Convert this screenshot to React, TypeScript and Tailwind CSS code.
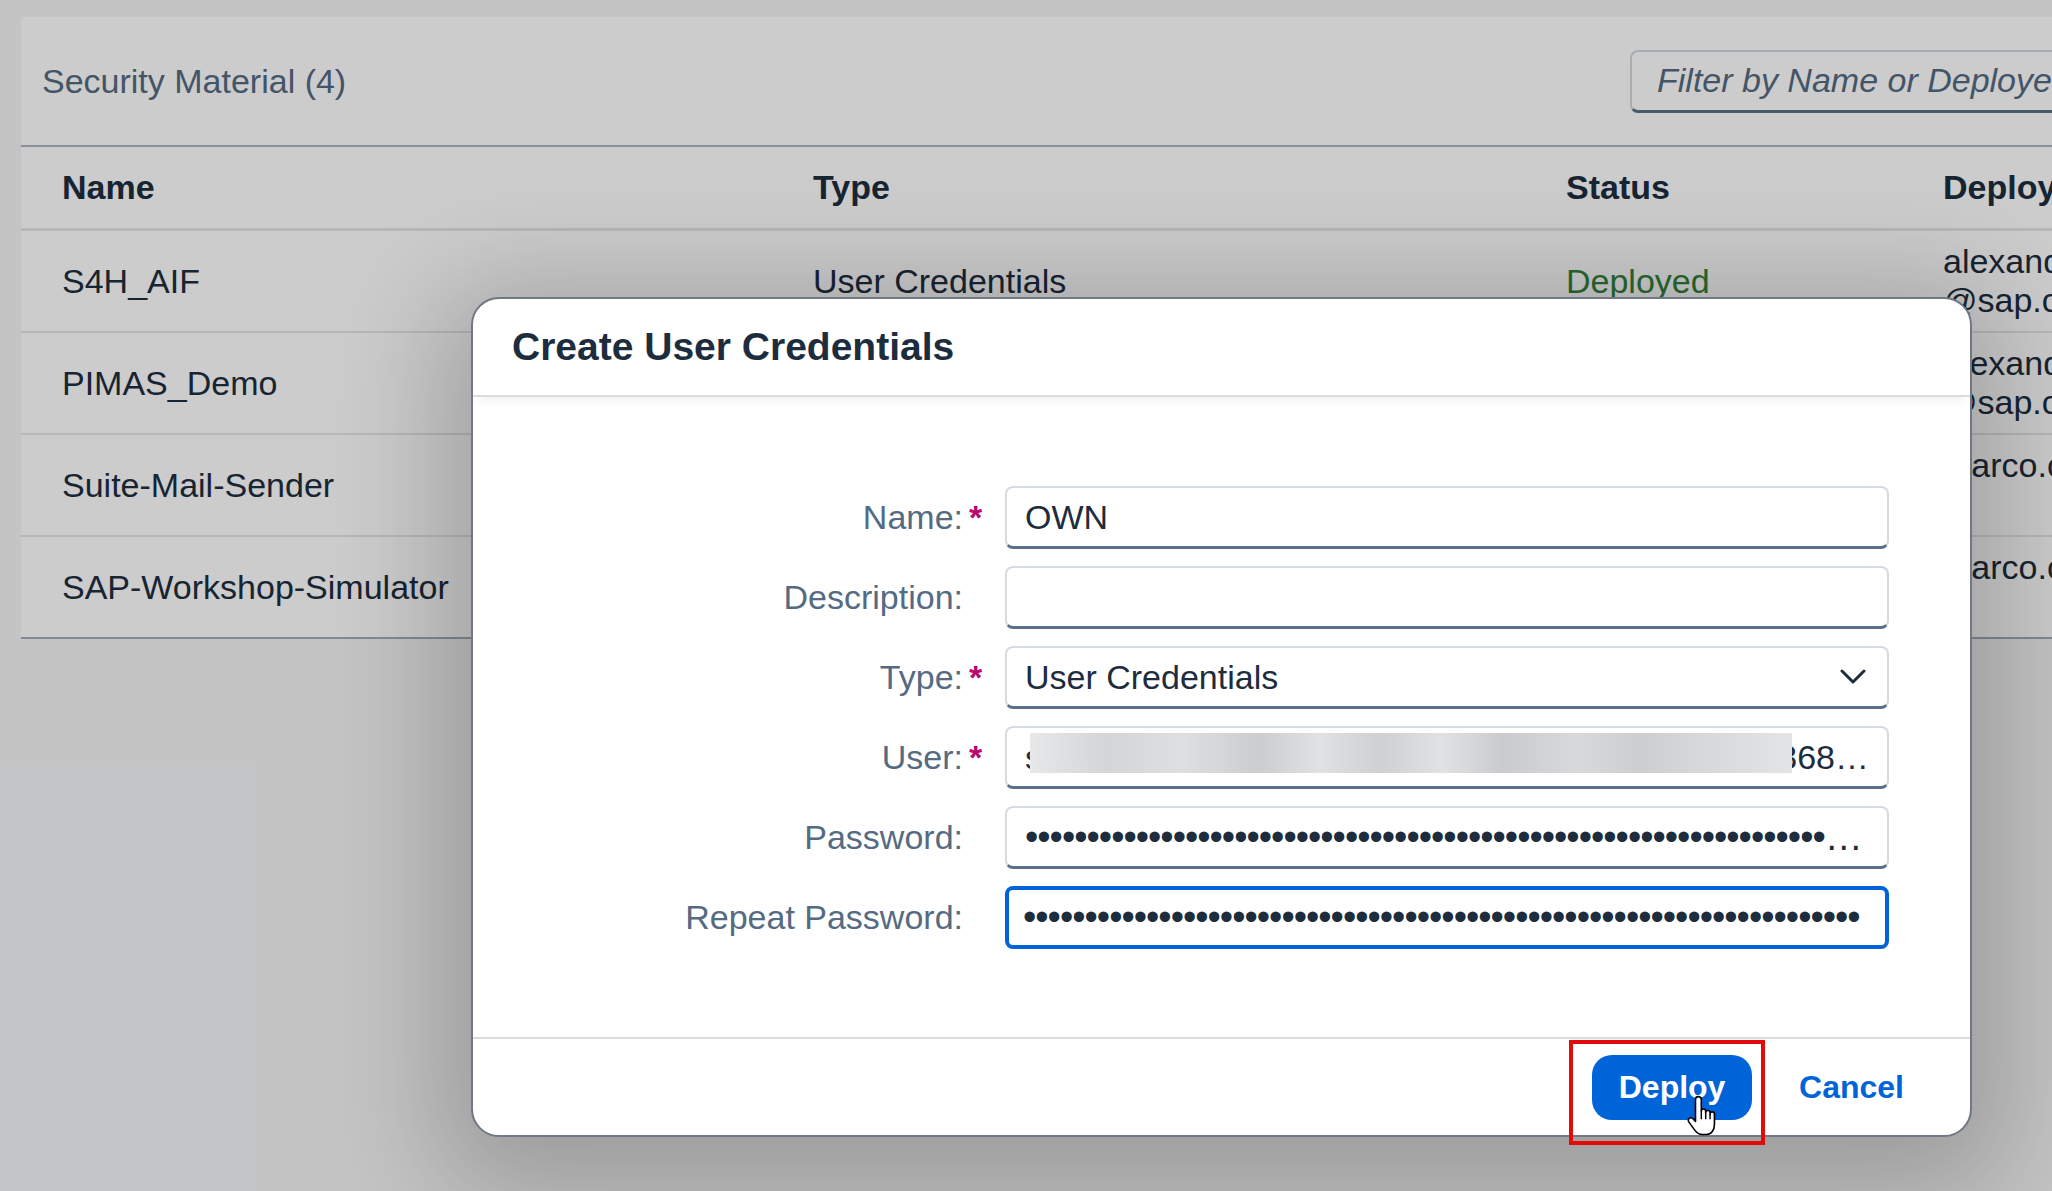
import React from 'react';

const rows = [
  { name: 'S4H_AIF', type: 'User Credentials', status: 'Deployed', by: ['alexander', '@sap.com'] },
  { name: 'PIMAS_Demo', type: 'User Credentials', status: 'Deployed', by: ['alexander', '@sap.com'] },
  { name: 'Suite-Mail-Sender', type: 'User Credentials', status: 'Deployed', by: ['marco.colombo', '\u00a0'] },
  { name: 'SAP-Workshop-Simulator', type: 'User Credentials', status: 'Deployed', by: ['marco.colombo', '\u00a0'] },
];

const dots = (n: number) => '\u2022'.repeat(n);

function Field({ label, required, children }: { label: string; required?: boolean; children: React.ReactNode }) {
  return (
    <>
      <div className="text-right text-[34px] text-[#556b82]">{label}</div>
      <div className="pl-[6px] text-[34px] font-bold text-[#ba066c]">{required ? '*' : ''}</div>
      {children}
    </>
  );
}

function Input({ children }: { children?: React.ReactNode }) {
  return (
    <div className="relative flex h-[63px] items-center overflow-hidden rounded-[8px] border-2 border-b-[3px] border-[#d5dbe0] border-b-[#5b7086] bg-white px-[18px] text-[34px] text-[#1d2d3e]">
      {children}
    </div>
  );
}

function HandCursor() {
  return (
    <svg width="35" height="44" viewBox="0 0 24 30" className="absolute left-[1686px] top-[1095px]">
      <path
        d="M8.5 1C9.6 1 10.5 1.9 10.5 3V11C10.5 10 11.3 9.5 12 9.5C12.8 9.5 13.5 10 13.5 11V12C13.5 11 14.2 10.5 15 10.5C15.8 10.5 16.5 11 16.5 12V13C16.5 12 17.2 11.5 18 11.5C18.8 11.5 19.5 12 19.5 13V20C19.5 24 17.5 27 14 27H11C8.5 27 7.5 26 6 24L2 18.5C1.3 17.5 1.5 16.3 2.4 15.8C3.3 15.3 4.3 15.6 5 16.4L6.5 18V3C6.5 1.9 7.4 1 8.5 1Z"
        fill="#fff"
        stroke="#000"
        strokeWidth="1.1"
        strokeLinejoin="round"
      />
      <path d="M10.5 11V16.5M13.5 12V16.5M16.5 13V16.5" stroke="#000" strokeWidth="1" />
    </svg>
  );
}

export default function App() {
  return (
    <div className="relative h-[1191px] w-[2052px] overflow-hidden bg-[#f5f6f7] font-['Liberation_Sans',Arial,sans-serif]">
      {/* page behind the dialog */}
      <div className="pl-[21px] pt-[17px]">
        <div className="w-[2140px] bg-white">
          <div className="flex h-[130px] items-center justify-between border-b-2 border-[#acb5bf] pl-[21px] pr-[20px]">
            <span className="text-[34px] text-[#556b82]">Security Material (4)</span>
            <div className="flex h-[63px] w-[511px] items-center overflow-hidden whitespace-nowrap rounded-[8px] border-2 border-b-[3px] border-[#d3d9df] border-b-[#5b7086] px-[25px] text-[34px] italic text-[#556b82]">
              Filter by Name or Deployed By
            </div>
          </div>

          <div className="grid h-[84px] grid-cols-[751px_753px_377px_1fr] items-center whitespace-nowrap border-b-[3px] border-[#e5e5e5] pl-[41px] text-[34px] font-bold text-[#1d2d3e]">
            <span>Name</span>
            <span>Type</span>
            <span>Status</span>
            <span>Deployed By</span>
          </div>

          {rows.map((r, i) => (
            <div
              key={r.name}
              className={`grid h-[102px] grid-cols-[751px_753px_377px_1fr] items-center border-b-2 pl-[41px] text-[34px] text-[#1d2d3e] ${
                i === rows.length - 1 ? 'border-[#a3adb8]' : 'border-[#e5e5e5]'
              }`}
            >
              <span>{r.name}</span>
              <span>{r.type}</span>
              <span className="text-[#33833d]">{r.status}</span>
              <div className="leading-[39px]">
                <div>{r.by[0]}</div>
                <div>{r.by[1]}</div>
              </div>
            </div>
          ))}
        </div>
      </div>

      {/* block layer */}
      <div className="absolute inset-0 bg-black/20" />

      {/* dialog */}
      <div className="absolute left-[471px] top-[297px] flex h-[840px] w-[1501px] flex-col overflow-hidden rounded-[28px] border-2 border-[#6f7883] bg-white shadow-[0_24px_110px_36px_rgba(0,0,0,0.2)]">
        <div className="relative z-10 flex h-[98px] shrink-0 items-center border-b-2 border-[#dcdcdc] pl-[39px] shadow-[0_8px_10px_-6px_rgba(0,0,0,0.08)]">
          <h2 className="text-[39px] font-bold text-[#1d2d3e]">Create User Credentials</h2>
        </div>

        <div className="flex-1 pt-[89px]">
          <div className="grid grid-cols-[490px_42px_884px] items-center gap-y-[17px]">
            <Field label="Name:" required>
              <Input>OWN</Input>
            </Field>
            <Field label="Description:">
              <Input />
            </Field>
            <Field label="Type:" required>
              <Input>
                <span className="flex-1">User Credentials</span>
                <svg width="26" height="16" viewBox="0 0 26 16" className="mr-[3px]">
                  <path d="M2 2L13 13L24 2" fill="none" stroke="#1d2d3e" strokeWidth="3" strokeLinecap="round" strokeLinejoin="round" />
                </svg>
              </Input>
            </Field>
            <Field label="User:" required>
              <Input>
                <span className="flex-1">s</span>
                <span>368…</span>
                <div className="absolute left-[23px] top-[5px] h-[40px] w-[762px] bg-[linear-gradient(90deg,#e7e8e9_0%,#d4d5d7_10%,#dedfe0_20%,#cbcdcf_30%,#e0e1e2_38%,#ced0d2_46%,#e1e2e3_54%,#cacbce_62%,#d8d9db_72%,#ccced0_80%,#d9dadb_90%,#e3e4e5_100%)]" />
              </Input>
            </Field>
            <Field label="Password:">
              <Input>
                <span className="block min-w-0 truncate text-[38px] tracking-[-1px]">{dots(90)}</span>
              </Input>
            </Field>
            <Field label="Repeat Password:">
              <div className="flex h-[63px] items-center overflow-hidden rounded-[8px] border-4 border-[#0064d9] bg-white px-[14px] text-[38px] text-[#1d2d3e]">
                <span className="whitespace-nowrap tracking-[-1px]">{dots(68)}</span>
              </div>
            </Field>
          </div>
        </div>

        <div className="flex h-[98px] shrink-0 items-center justify-end gap-[19px] border-t-2 border-[#dcdcdc] pr-[38px]">
          <button className="h-[65px] w-[160px] rounded-[20px] bg-[#0064d9] text-[32px] font-bold text-white">Deploy</button>
          <button className="h-[65px] px-[28px] text-[32px] font-bold text-[#0064d9]">Cancel</button>
        </div>
      </div>

      {/* annotation */}
      <div className="absolute left-[1569px] top-[1040px] h-[105px] w-[196px] border-4 border-[#e30a0a]" />
      <HandCursor />
    </div>
  );
}
